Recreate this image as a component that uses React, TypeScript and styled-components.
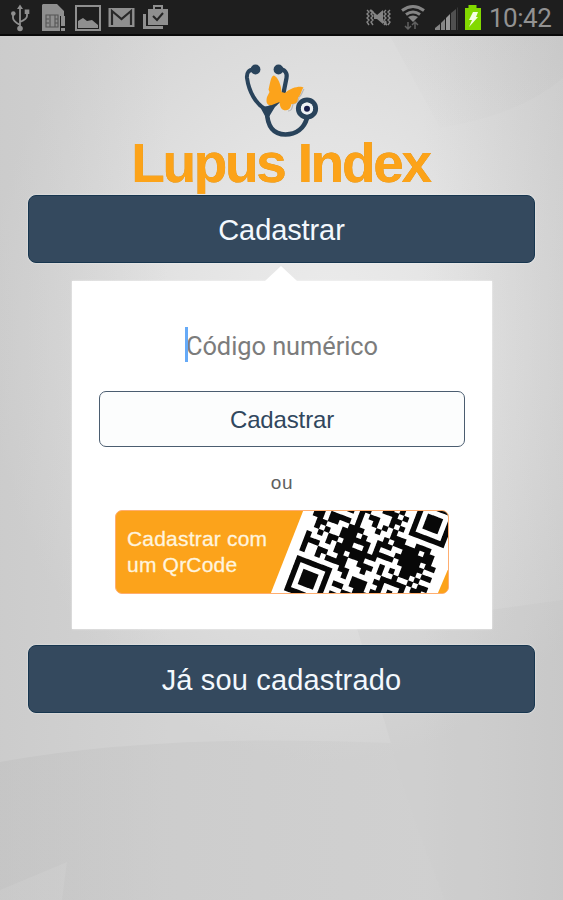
import React from 'react';
import styled, { createGlobalStyle } from 'styled-components';

const GlobalStyle = createGlobalStyle`
  * { box-sizing: border-box; }
  body { margin: 0; background: #d3d3d3; }
  button, input { font: inherit; margin: 0; }
`;

const Screen = styled.div`
  position: relative;
  isolation: isolate;
  width: 563px;
  height: 900px;
  overflow: hidden;
  display: flex;
  flex-direction: column;
  font-family: 'Liberation Sans', Arial, sans-serif;
  background:
    linear-gradient(90deg, rgba(185,185,185,.28), transparent 30%, transparent 75%, rgba(180,180,180,.25)),
    radial-gradient(ellipse 340px 430px at 58% 37%, #ececec 0%, #e3e3e3 45%, #d3d3d3 100%);
`;

const Backdrop = styled.svg`
  position: absolute;
  inset: 0;
  z-index: -1;
`;

const StatusBar = styled.header`
  height: 36px;
  flex: none;
  display: flex;
  justify-content: space-between;
  background: #1e1e1e;
  border-bottom: 2px solid #090909;
`;

const StatusGroup = styled.div`
  display: flex;
  align-items: flex-start;
`;

const Clock = styled.time`
  width: 74px;
  padding-left: 0;
  font: 26px/36px Roboto, sans-serif;
  letter-spacing: -0.5px;
  color: #929292;
`;

const Brand = styled.div`
  height: 159px;
  flex: none;
  display: flex;
  flex-direction: column;
  align-items: center;
  padding-top: 26px;
`;

const BrandMark = styled.svg`
  flex: none;
  display: block;
`;

const BrandName = styled.h1`
  margin: -5px 2px 0 0;
  font-size: 55px;
  line-height: 58px;
  height: 58px;
  font-weight: 700;
  letter-spacing: -2.3px;
  white-space: nowrap;
  color: #fca319;
  text-shadow: 0 -0.5px 0.5px #c48a26;
`;

const Content = styled.main`
  display: flex;
  flex-direction: column;
  padding: 0 28px;
`;

const PrimaryButton = styled.button<{ $tracking?: number }>`
  height: 68px;
  border: 1.5px solid #17364f;
  border-radius: 8px;
  padding: 2px 0 0;
  background: #34495e;
  color: #f3f8fd;
  font-size: 29px;
  letter-spacing: ${({ $tracking = 0 }) => $tracking}px;
  box-shadow: 0 0 2px rgba(255,255,255,.7);
`;

const Panel = styled.section`
  position: relative;
  width: 420px;
  height: 348px;
  margin: 18px 0 16px 44px;
  display: flex;
  flex-direction: column;
  align-items: center;
  padding-top: 38px;
  background: #fff;
  box-shadow: 0 0 2px rgba(255,255,255,.7);
  &::before {
    content: '';
    position: absolute;
    top: -15px;
    left: 193px;
    border: 16px solid transparent;
    border-top: 0;
    border-bottom: 15px solid #fff;
  }
`;

const CodeField = styled.div`
  position: relative;
  height: 54px;
  display: flex;
  align-items: center;
  font: 25.4px/54px Roboto, sans-serif;
  font-weight: 400;
  letter-spacing: -0.05px;
  color: #7c7c7c;
`;

const Caret = styled.span`
  position: absolute;
  left: -1px;
  top: 8px;
  width: 3px;
  height: 35px;
  background: #66aaf7;
`;

const OutlineButton = styled.button`
  width: 366px;
  height: 56px;
  margin-top: 18px;
  padding: 2px 0 0;
  border: 1.5px solid #4b5d70;
  border-radius: 7px;
  background: #fcfdfd;
  color: #30475e;
  font-size: 24px;
  letter-spacing: -0.15px;
`;

const Separator = styled.div`
  height: 63px;
  padding-top: 9px;
  line-height: 54px;
  font-size: 19px;
  letter-spacing: .8px;
  color: #606060;
`;

const QrButton = styled.button`
  width: 334px;
  height: 84px;
  flex: none;
  display: flex;
  justify-content: space-between;
  padding: 0;
  border: 1px solid #ffae70;
  border-radius: 7px;
  overflow: hidden;
  background: #fca31b;
  color: #fff4de;
  text-align: left;
`;

const QrLabel = styled.span`
  padding: 15px 0 0 11px;
  font-size: 21px;
  line-height: 26px;
  letter-spacing: .2px;
  white-space: nowrap;
  -webkit-text-stroke: 0.3px #fff4de;
`;

const QrArt = styled.svg`
  flex: none;
  display: block;
`;

const QR_ROWS = [
  '1111111001011010001111111',
  '1000001010110110101000001',
  '1011101001011011001011101',
  '1011101011001101001011101',
  '1011101000001110101011101',
  '1000001011000011001000001',
  '1111111010110010101111111',
  '0000000010010101000000000',
  '1101111010001001110011100',
  '1101100111000010111110110',
  '0110001110100111001111110',
  '0101001111110100011111011',
  '0010110110010111101111100',
  '1000101111111100000111011',
  '1110001101110001010110100',
  '1001100110011101001001011',
  '1001011110001000111110110',
  '0000000011000001100010011',
  '1111111001011100101011101',
  '1000001000011101100010110',
  '1011101011001110111110101',
  '1011101000111101010011010',
  '1011101011011010111101101',
  '1000001010111101101011011',
  '1111111011011011110101101',
];

const qrPath = QR_ROWS.map((row, y) =>
  [...row].map((bit, x) => (bit === '1' ? `M${x} ${y}h1.03v1.03h-1.03z` : '')).join(''),
).join('');

const QrPattern = () => (
  <QrArt width="177" height="82" viewBox="271 511 177 82">
    <path d="M303.5 510H448V574L439 594H270.5z" fill="#fff" />
    <path
      d={qrPath}
      transform="matrix(5 1.92 -1.92 5 331.9 465)"
      fill="#080808"
    />
    <path d="M449 567V594H437.5z" fill="#fca31b" />
  </QrArt>
);

const Logo = () => (
  <BrandMark width="76" height="77" viewBox="244 62 76 77">
    <g fill="none" stroke="#29435b" strokeLinecap="round" strokeLinejoin="round">
      <path d="M254 69.5C248.5 69.5 246.5 73 247 78C249 92 256 104 264.5 108.5C270 108 275 105 278 101.5" strokeWidth="4" />
      <path d="M279 69.5C285 69 287.5 73 286.5 78L283.5 93" strokeWidth="4.2" />
      <path d="M267 111C267 127 274 134.5 285.5 134.5C296 134.5 304 128.5 307 118" strokeWidth="4.6" />
      <circle cx="307" cy="108.5" r="8.6" strokeWidth="5" />
    </g>
    <path d="M259.5 106L269 108.5L278 102L269.5 116H265z" fill="#29435b" />
    <circle cx="255.5" cy="69.5" r="4.9" fill="#29435b" />
    <circle cx="278.5" cy="69.5" r="4.9" fill="#29435b" />
    <circle cx="307" cy="108.5" r="6.1" fill="#edf1f4" />
    <circle cx="307" cy="108.7" r="3" fill="#171e4a" />
    <path d="M288 111c4 0 4-3 5-7 5-1 6-4 6-7 3-2 3-5 5-8" fill="none" stroke="#777" strokeOpacity=".4" strokeWidth="1.2" />
    <path d="M274 75.5C271 75 270 84 268.5 89.5L269.5 92L267 97C265.5 103 267.5 106 272 105L279.5 102C280 108 282 110.5 286 110.3C290 110.3 291 106 291.5 104C296 104 298 102 298 97.5C301 95 301.5 90 303.5 87.5C301 85.5 291 87 285 93L281.5 92C281.5 86 278 77 274 75.5Z" fill="#fca31b" />
  </BrandMark>
);

const NotificationIcons = () => (
  <svg width="180" height="34" viewBox="0 0 180 34" fill="#8f8f8f">
    <g fill="none" stroke="#8f8f8f" strokeWidth="1.8">
      <path d="M20 7v22M13 13v5q0 3 7 7M27 12v4q0 3-7 6" />
    </g>
    <path d="M20 4.5l3 4.5h-6zM24.7 9.5h4.6v4.5h-4.6z" />
    <circle cx="13.3" cy="13.5" r="2.3" /><circle cx="20" cy="28.5" r="2.8" />
    <path d="M43 4h14l7 7v5h-4v15H42V5z" />
    <path d="M46 15h12v12H46zM46 19h3m-3 4h3m6-4h3m-3 4h3M50 15v12m5-12v12" fill="none" stroke="#555" strokeWidth="1.1" />
    <path d="M61 16h4v10h-4zM61 28h4v3h-4z" />
    <path d="M76 6h24v24H76z" fill="none" stroke="#8f8f8f" strokeWidth="2" />
    <path d="M78 21l5-3 4 3 5-1 6 5v3H78z" />
    <path d="M108.5 8h26v19h-26z" />
    <path d="M112 25V11l9.5 8 9.5-8v14" fill="none" stroke="#292929" strokeWidth="2.2" />
    <path d="M148 9h20v16h-20zM143 14h3v12h17v3h-20z" />
    <path d="M154 9V6h8v3" fill="none" stroke="#8f8f8f" strokeWidth="2" />
    <path d="M153 16l4 4 6-7" fill="none" stroke="#252525" strokeWidth="2" />
  </svg>
);

const SystemIcons = () => (
  <svg width="139" height="34" viewBox="350 0 139 34" fill="#858585">
    <g fill="none" stroke="#858585" strokeWidth="1.4">
      <path d="M367 10l2 2-2 2 2 2-2 2 2 2-2 2 2 3M371 10l2 2-2 2 2 2-2 2 2 2-2 2 2 3M386 10l-2 2 2 2-2 2 2 2-2 2 2 2-2 3M390 10l-2 2 2 2-2 2 2 2-2 2 2 2-2 3" />
      <path d="M370 10l17 15" strokeWidth="1.8" />
    </g>
    <path d="M374 15h3l6-5v14l-6-5h-3z" />
    <g fill="none" stroke="#858585" strokeWidth="3">
      <path d="M402 10.5q11-8 22 0" /><path d="M406 14.5q7-5 14 0" />
    </g>
    <path d="M408 17q5-3 10 0l-5 5z" />
    <path d="M408 22v7m-3-3 3 3 3-3M415 29v-7m-3 3 3-3 3 3" fill="none" stroke="#606060" strokeWidth="1.5" />
    <path d="M435 30v-2l5-4v6zM441 30v-7l4-4v11z" />
    <path d="M446 30V18l4-4v16z" fill="#999" />
    <path d="M451 30V13l5-4v21z" fill="#505050" />
    <path d="M457 30V8l1-1v23z" fill="#373737" />
    <path d="M468.5 5h8v3h4.5v22h-16V8h3.5z" fill="#82d900" />
    <path d="M473 12h5l-2 5h2l-9 10 3-7h-3z" fill="#f4ffe2" />
  </svg>
);

export default function App() {
  return (
    <Screen>
      <GlobalStyle />
      <Backdrop viewBox="0 0 563 900" aria-hidden="true">
        <defs>
          <linearGradient id="hill" x1="0" y1="0" x2="1" y2="0">
            <stop offset="0" stopColor="#b8b8b8" stopOpacity=".32" />
            <stop offset="1" stopColor="#c4c4c4" stopOpacity=".2" />
          </linearGradient>
          <linearGradient id="haze" x1="0" y1="1" x2="1" y2="0">
            <stop offset="0" stopColor="#bcbcbc" stopOpacity="0" />
            <stop offset="1" stopColor="#bcbcbc" stopOpacity=".2" />
          </linearGradient>
        </defs>
        <path d="M0 762Q160 733 391 743Q405 800 445 900H0z" fill="url(#hill)" />
        <path d="M357 628L391 743Q405 800 445 900H563V600z" fill="#bebebe" fillOpacity=".17" />
        <path d="M0 890L67 862L62 900H0z" fill="#fff" fillOpacity=".08" />
        <path d="M563 78Q520 115 440 128L390 36H563z" fill="url(#haze)" />
      </Backdrop>
      <StatusBar>
        <StatusGroup><NotificationIcons /></StatusGroup>
        <StatusGroup><SystemIcons /><Clock>10:42</Clock></StatusGroup>
      </StatusBar>
      <Brand>
        <Logo />
        <BrandName>Lupus Index</BrandName>
      </Brand>
      <Content>
        <PrimaryButton $tracking={-0.1}>Cadastrar</PrimaryButton>
        <Panel>
          <CodeField><Caret />Código numérico</CodeField>
          <OutlineButton>Cadastrar</OutlineButton>
          <Separator>ou</Separator>
          <QrButton>
            <QrLabel>Cadastrar com<br />um QrCode</QrLabel>
            <QrPattern />
          </QrButton>
        </Panel>
        <PrimaryButton $tracking={0.15}>Já sou cadastrado</PrimaryButton>
      </Content>
    </Screen>
  );
}
